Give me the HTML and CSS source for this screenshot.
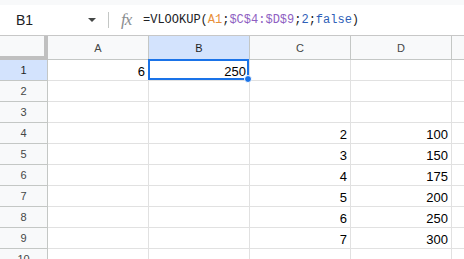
FILE: index.html
```html
<!DOCTYPE html>
<html>
<head>
<meta charset="utf-8">
<link rel="stylesheet" href="styles.css">
</head>
<body>
<div class="app">
  <div class="topstrip"></div>
  <div class="fbar">
    <div class="namebox"><span class="ref">B1</span><span class="caret"></span></div>
    <div class="sep"></div>
    <div class="fx">fx</div>
    <div class="formula">=VLOOKUP(<span class="c-a1">A1</span>;<span class="c-rng">$C$4:$D$9</span>;<span class="c-num">2</span>;<span class="c-num">false</span>)</div>
  </div>
  <div class="grid">
    <div class="corner"></div>
    <div class="ch">A</div>
    <div class="ch sel-h">B</div>
    <div class="ch">C</div>
    <div class="ch">D</div>
    <div class="ch last"></div>

    <div class="rh sel-h">1</div>
    <div class="cell">6</div>
    <div class="cell active">250<div class="selbox"><div class="handle"></div></div></div>
    <div class="cell"></div>
    <div class="cell"></div>
    <div class="cell last"></div>

    <div class="rh">2</div><div class="cell"></div><div class="cell"></div><div class="cell"></div><div class="cell"></div><div class="cell last"></div>
    <div class="rh">3</div><div class="cell"></div><div class="cell"></div><div class="cell"></div><div class="cell"></div><div class="cell last"></div>
    <div class="rh">4</div><div class="cell"></div><div class="cell"></div><div class="cell">2</div><div class="cell">100</div><div class="cell last"></div>
    <div class="rh">5</div><div class="cell"></div><div class="cell"></div><div class="cell">3</div><div class="cell">150</div><div class="cell last"></div>
    <div class="rh">6</div><div class="cell"></div><div class="cell"></div><div class="cell">4</div><div class="cell">175</div><div class="cell last"></div>
    <div class="rh">7</div><div class="cell"></div><div class="cell"></div><div class="cell">5</div><div class="cell">200</div><div class="cell last"></div>
    <div class="rh">8</div><div class="cell"></div><div class="cell"></div><div class="cell">6</div><div class="cell">250</div><div class="cell last"></div>
    <div class="rh">9</div><div class="cell"></div><div class="cell"></div><div class="cell">7</div><div class="cell">300</div><div class="cell last"></div>
    <div class="rh">10</div><div class="cell"></div><div class="cell"></div><div class="cell"></div><div class="cell"></div><div class="cell last"></div>
  </div>
</div>
</body>
</html>
```

FILE: styles.css
```css
* { box-sizing: border-box; }
html, body { margin: 0; padding: 0; background: #fff; }
body { width: 464px; height: 259px; overflow: hidden; font-family: "Liberation Sans", Arial, sans-serif; }

.app { width: 464px; height: 259px; overflow: hidden; }

.topstrip { height: 5px; background: #f8f9fa; }

.fbar {
  height: 31px;
  display: flex;
  align-items: center;
  border-bottom: 1px solid #c7c7c7;
  background: #fff;
}
.namebox {
  width: 100px;
  display: flex;
  align-items: center;
  padding-left: 16px;
}
.ref { font-size: 14px; color: #202124; }
.caret {
  margin-left: auto;
  margin-right: 4px;
  width: 0; height: 0;
  border-left: 4px solid transparent;
  border-right: 4px solid transparent;
  border-top: 4px solid #444746;
}
.sep { width: 1px; height: 16px; background: #c4c7c5; margin-left: 8px; }
.fx {
  margin-left: 12px;
  font-family: "Liberation Serif", serif;
  font-style: italic;
  font-size: 17px;
  color: #8a8d90;
  letter-spacing: -1px;
  width: 22px;
}
.formula {
  font-family: "Liberation Mono", "DejaVu Sans Mono", monospace;
  font-size: 12px;
  color: #202124;
  white-space: nowrap;
}
.c-a1 { color: #e8903a; }
.c-rng { color: #8f5fc2; }
.c-num { color: #2f5fb8; }

.grid {
  display: grid;
  grid-template-columns: 48px 101px 101px 101px 101px 1fr;
  grid-template-rows: 24px repeat(10, 21px);
}
.corner {
  background: #f8f9fa;
  border-right: 4px solid #c0c0c0;
  border-bottom: 4px solid #c0c0c0;
}
.ch {
  background: #f8f9fa;
  border-right: 1px solid #c4c7c5;
  border-bottom: 1px solid #c4c7c5;
  font-size: 11px;
  color: #444746;
  display: flex;
  align-items: center;
  justify-content: center;
}
.rh {
  background: #f8f9fa;
  border-right: 1px solid #c4c7c5;
  border-bottom: 1px solid #c4c7c5;
  font-size: 11px;
  color: #444746;
  display: flex;
  align-items: center;
  justify-content: center;
}
.sel-h { background: #d3e3fd; color: #0b57d0; }
.ch.sel-h, .rh.sel-h { color: #1f1f1f; }
.cell {
  border-right: 1px solid #e1e1e1;
  border-bottom: 1px solid #e1e1e1;
  font-size: 13px;
  color: #000;
  text-align: right;
  padding: 3px 3px 0 0;
  line-height: 17px;
}
.last { border-right: none; }
.active { position: relative; }
.selbox {
  position: absolute;
  left: -1px; top: -1px; right: 0; bottom: 0;
  border: 2px solid #1a73e8;
}
.handle {
  position: absolute;
  right: -5px; bottom: -5px;
  width: 8px; height: 8px;
  border-radius: 50%;
  background: #1a73e8;
  border: 1px solid #fff;
}
```
